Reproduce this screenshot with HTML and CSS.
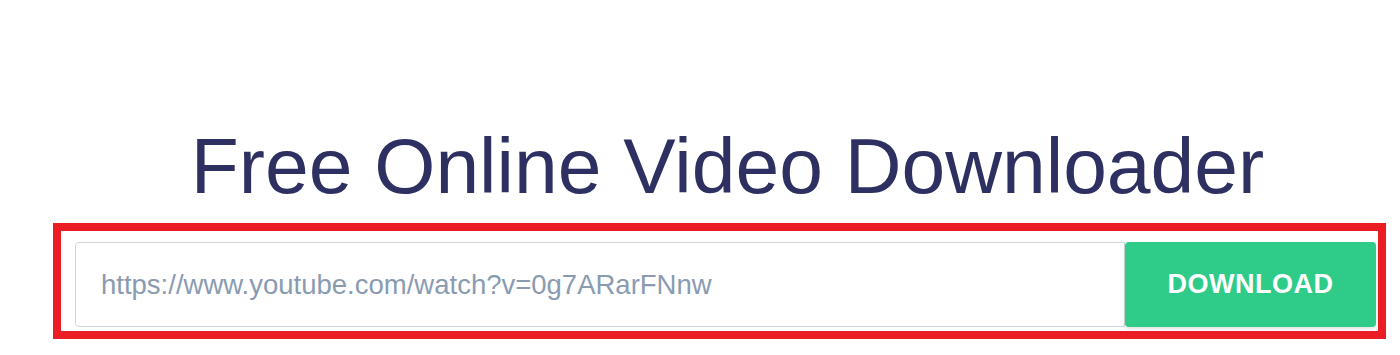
FILE: index.html
```html
<!DOCTYPE html>
<html lang="en">
<head>
<meta charset="utf-8">
<title>Free Online Video Downloader</title>
<link rel="stylesheet" href="styles.css">
</head>
<body>
<main class="page">
  <h1 class="title">Free Online Video Downloader</h1>
  <form class="search-box" onsubmit="return false;">
    <input class="url-input" type="text" placeholder="https://www.youtube.com/watch?v=0g7ARarFNnw">
    <button class="download-btn" type="submit">DOWNLOAD</button>
  </form>
</main>
</body>
</html>
```
FILE: styles.css
```css
* { box-sizing: border-box; }
html, body {
  margin: 0;
  padding: 0;
  background: #ffffff;
}
body {
  font-family: "Liberation Sans", Arial, sans-serif;
  width: 1400px;
  height: 355px;
  overflow: hidden;
}
.page {
  padding-top: 127px;
  padding-left: 53px;
  width: 1386px;
}
.title {
  margin: 0;
  padding-left: 16px;
  text-align: center;
  font-size: 78.6px;
  line-height: 78px;
  font-weight: 400;
  color: #2e3062;
}
.search-box {
  margin: 18px 0 0 0;
  width: 1333px;
  border: 8px solid #ec1c24;
  padding: 11px 0 4px 14px;
  display: flex;
}
.url-input {
  width: 1050px;
  height: 85px;
  border: 1px solid #cfd5dc;
  border-radius: 4px 0 0 4px;
  padding: 0 0 0 25px;
  font-family: "Liberation Sans", Arial, sans-serif;
  font-size: 27.5px;
  color: #495057;
  outline: none;
  background: #fff;
}
.url-input::placeholder {
  color: #8a9bb1;
  opacity: 1;
}
.download-btn {
  width: 251px;
  height: 85px;
  border: none;
  border-radius: 4px;
  background: #2ecc88;
  color: #ffffff;
  font-family: "Liberation Sans", Arial, sans-serif;
  font-weight: 700;
  font-size: 27px;
  letter-spacing: 0.5px;
  box-shadow: 0 2px 4px rgba(0, 0, 0, 0.12);
  cursor: pointer;
  padding: 0;
}
```
